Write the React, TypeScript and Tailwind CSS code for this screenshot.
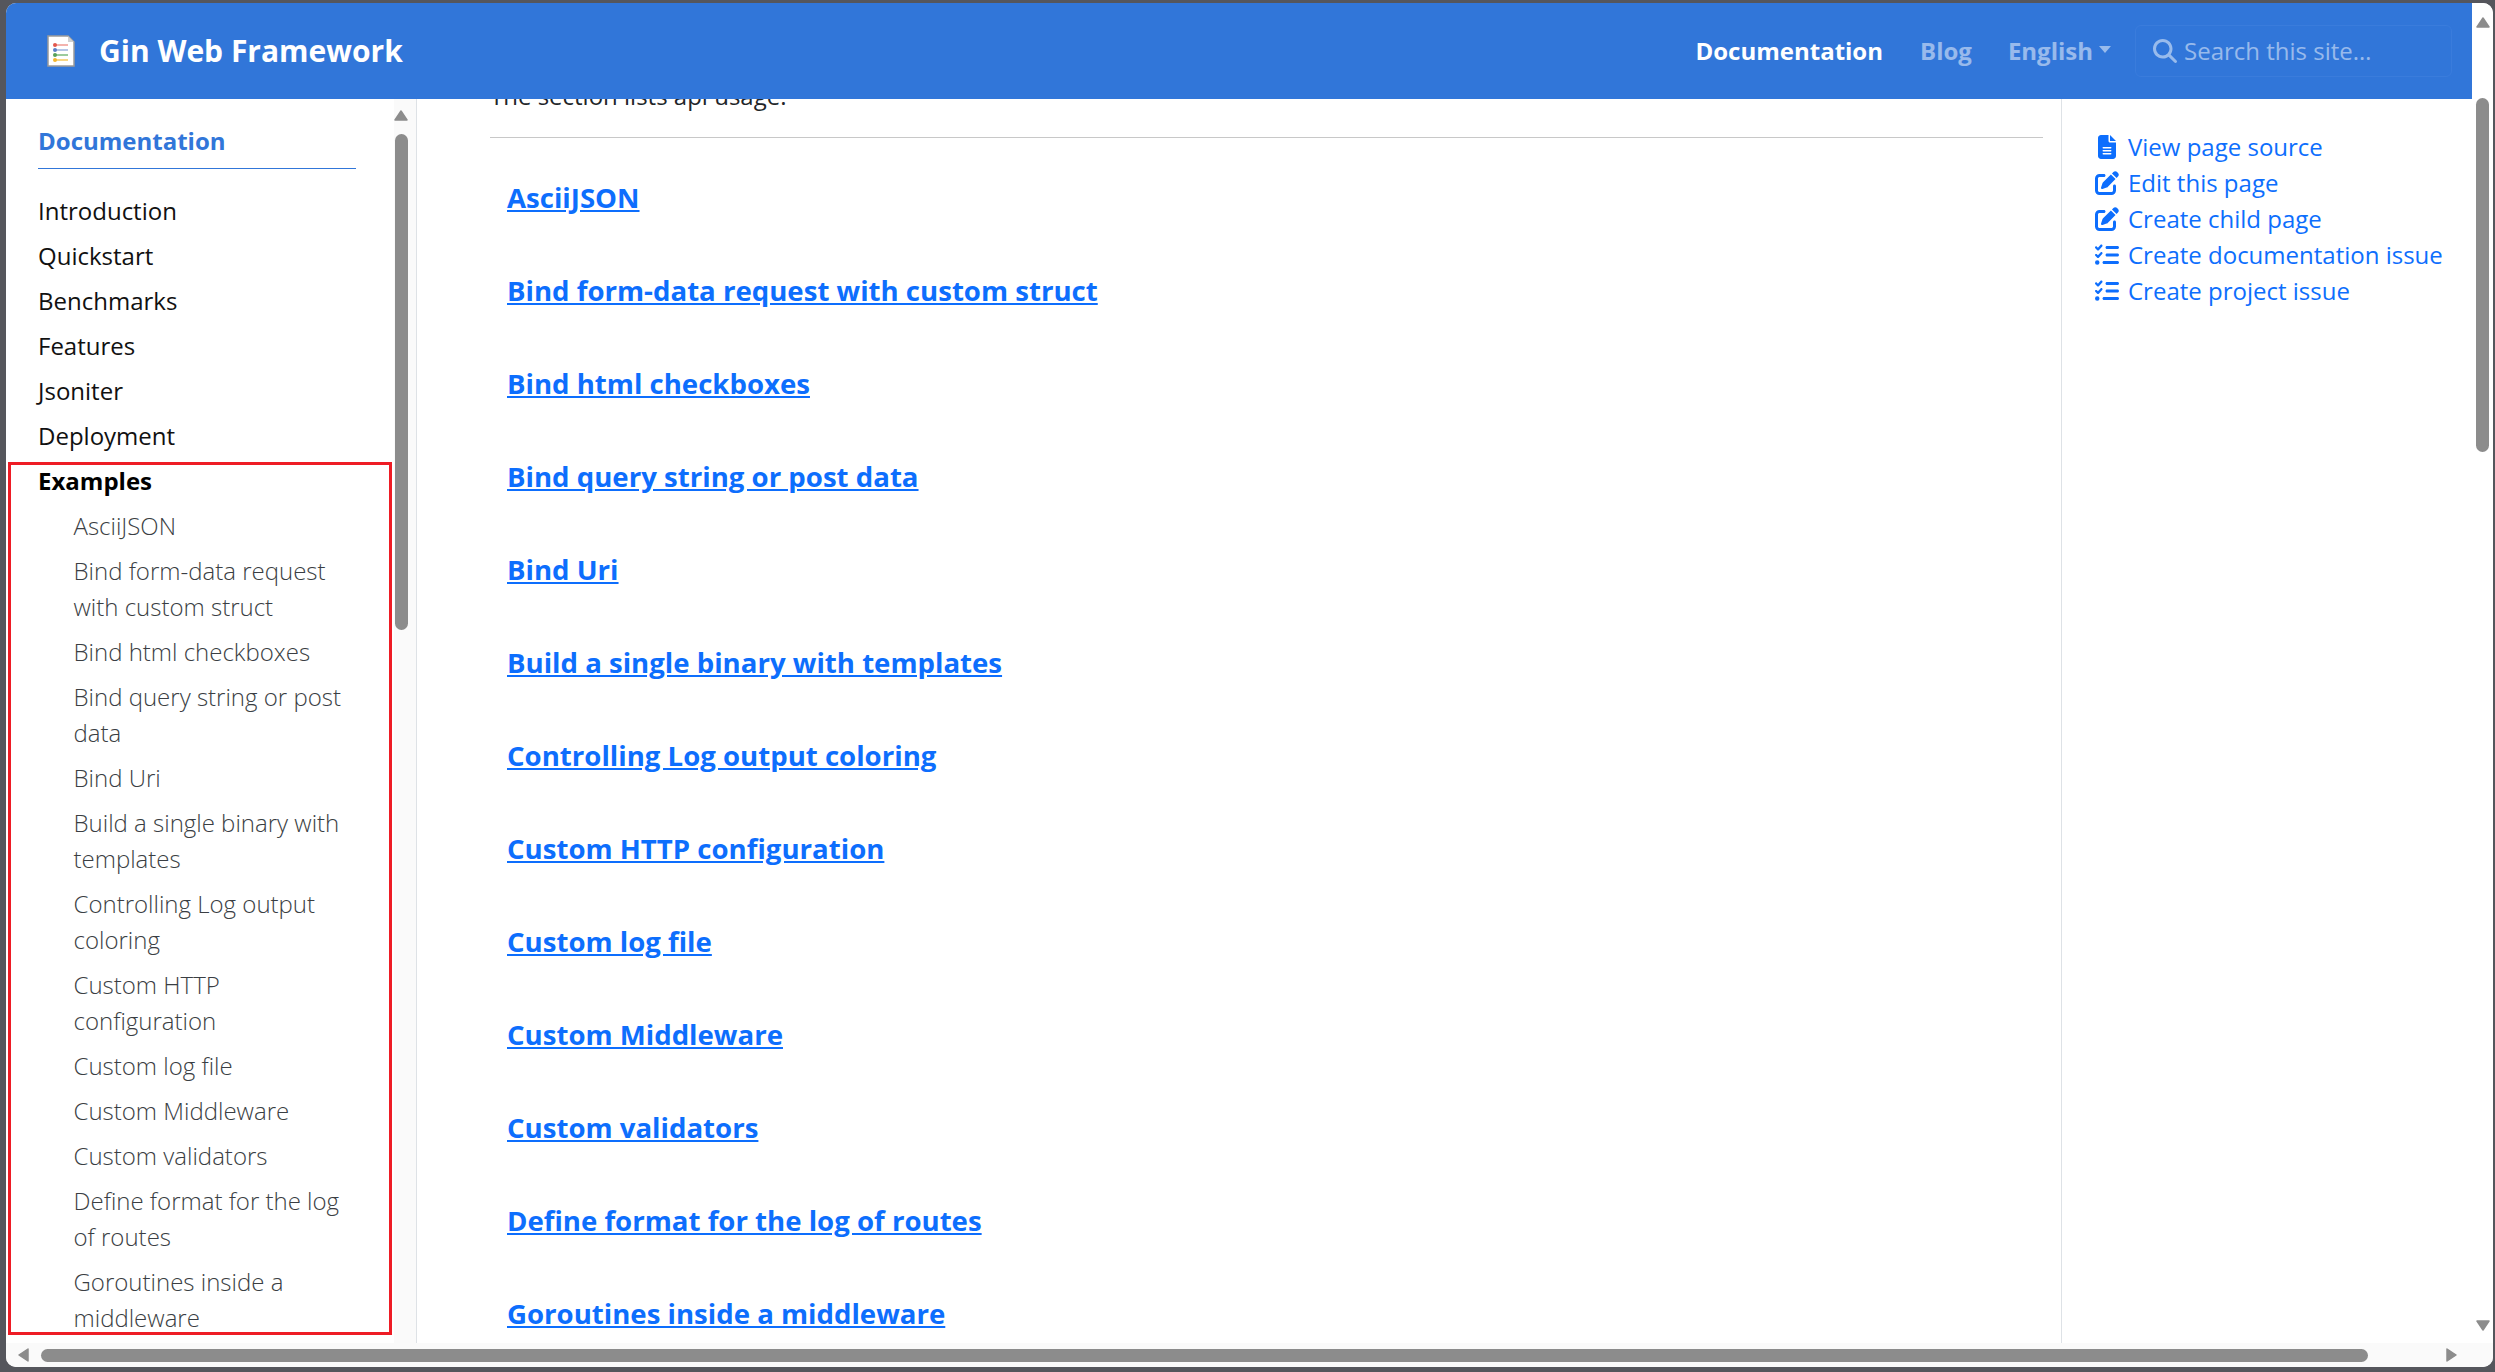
import { FaFileLines, FaPenToSquare, FaListCheck, FaMagnifyingGlass } from 'react-icons/fa6';

const topLinks = ['Introduction', 'Quickstart', 'Benchmarks', 'Features', 'Jsoniter', 'Deployment'];

const exampleLinks = [
  'AsciiJSON',
  'Bind form-data request with custom struct',
  'Bind html checkboxes',
  'Bind query string or post data',
  'Bind Uri',
  'Build a single binary with templates',
  'Controlling Log output coloring',
  'Custom HTTP configuration',
  'Custom log file',
  'Custom Middleware',
  'Custom validators',
  'Define format for the log of routes',
  'Goroutines inside a middleware',
];

const pageLinks = [
  { icon: FaFileLines, label: 'View page source' },
  { icon: FaPenToSquare, label: 'Edit this page' },
  { icon: FaPenToSquare, label: 'Create child page' },
  { icon: FaListCheck, label: 'Create documentation issue' },
  { icon: FaListCheck, label: 'Create project issue' },
];

function Arrow({ dir, className }: { dir: 'up' | 'down' | 'left' | 'right'; className?: string }) {
  const points = {
    up: '7,1 13,10 1,10',
    down: '1,1 13,1 7,10',
    left: '10,1 10,13 1,7',
    right: '1,1 1,13 10,7',
  }[dir];
  return (
    <svg width="14" height="14" viewBox="0 0 14 14" className={className}>
      <polygon points={points} fill="#8c8c8c" stroke="#8c8c8c" strokeWidth="1.5" strokeLinejoin="round" />
    </svg>
  );
}

function Logo() {
  const rows = [
    ['#e2574c', '#ef9a93', 10],
    ['#5b80c7', '#9db4e0', 15],
    ['#57a05a', '#7cba7e', 20],
    ['#f2b62f', '#f5c95f', 25],
  ] as const;
  return (
    <svg width="28" height="32" viewBox="0 0 28 32" className="shrink-0">
      <path d="M1 1H21L27 7V31H1Z" fill="#fff" stroke="#9a9a9a" strokeWidth="1.5" />
      <path d="M21 1V7H27Z" fill="#cfcfcf" />
      {rows.map(([dot, line, y]) => (
        <g key={y}>
          <rect x="7" y={y - 0.75} width="14" height="1.5" fill={line} />
          <circle cx="8" cy={y} r="2" fill={dot} />
        </g>
      ))}
    </svg>
  );
}

function Sidebar() {
  return (
    <aside className="relative flex w-[411px] shrink-0 overflow-hidden border-r border-[#dee2e6]">
      <nav className="min-w-0 flex-1 pl-[32px] pr-[38px] pt-[24px] text-[24px] leading-[36px]">
        <div className="border-b border-[#3176d9] pb-[9px] font-bold text-[#3176d9]">Documentation</div>
        <ul className="mt-[19px]">
          {topLinks.map((link) => (
            <li key={link} className="py-[4.5px] text-[#111]">
              {link}
            </li>
          ))}
          <li className="py-[4.5px] font-bold text-black">Examples</li>
          {exampleLinks.map((link) => (
            <li key={link} className="py-[4.5px] pl-[35.5px] font-light text-[#3a3e43]">
              {link}
            </li>
          ))}
        </ul>
      </nav>
      <div className="flex w-[22px] shrink-0 flex-col items-start bg-[#fafafa] pt-[11px]">
        <Arrow dir="up" />
        <div className="mt-[10px] ml-[1px] h-[496px] w-[13px] rounded-full bg-[#8c8c8c]" />
      </div>
      <div className="absolute left-[2px] top-[363px] h-[873px] w-[384px] border-[3px] border-[#ee1c25]" />
    </aside>
  );
}

export default function App() {
  return (
    <div className="h-screen overflow-hidden bg-[#55565c] pb-[5px] pl-[6px] pr-[2px] pt-[3px] font-['Open_Sans',sans-serif]">
      <div className="flex h-full flex-col overflow-hidden rounded-[10px] bg-white">
        <div className="flex min-h-0 flex-1">
          <div className="flex min-w-0 flex-1 flex-col">
            <header className="flex h-[96px] shrink-0 items-center bg-[#3176d9] pl-[41px] pr-[19px] text-[24px] font-bold">
              <Logo />
              <span className="ml-[24px] mt-[-2px] text-[30px] text-white">Gin Web Framework</span>
              <nav className="ml-auto mr-[1px] flex items-center">
                <span className="text-white">Documentation</span>
                <span className="ml-[37px] text-white/50">Blog</span>
                <span className="ml-[36px] flex items-center text-white/50">
                  English
                  <span className="ml-[6px] mt-[-4px] border-x-[6px] border-t-[7px] border-x-transparent border-t-white/50" />
                </span>
                <div className="ml-[24px] flex h-[52px] w-[317px] items-center rounded-md border border-[#3a7cdc] pl-[17px] text-[24px] font-normal text-white/50">
                  <FaMagnifyingGlass className="mr-[7px] size-[24px]" />
                  Search this site…
                </div>
              </nav>
            </header>
            <div className="flex min-h-0 flex-1">
              <Sidebar />
              <main className="min-w-0 flex-1 overflow-hidden pl-[73px] pr-[18px]">
                <p className="-mt-[21px] text-[24px] leading-[36px] text-[#212529]">The section lists api usage.</p>
                <hr className="mt-[23px] border-t border-[#c8c8c8]" />
                <div className="pl-[17px] pt-[37px]">
                  {exampleLinks.map((title) => (
                    <h2 key={title} className="mb-[48px] text-[27.6px] font-bold leading-[45px] text-[#0d6efd] underline">
                      {title}
                    </h2>
                  ))}
                </div>
              </main>
              <aside className="w-[411px] shrink-0 border-l border-[#dee2e6] pl-[33px] pt-[30px] text-[24px] leading-[36px] text-[#0d6efd]">
                {pageLinks.map(({ icon: Icon, label }, i) => (
                  <div key={i} className="flex items-center">
                    <span className="flex w-[33px] shrink-0 justify-center pr-[9px]">
                      <Icon className="size-[24px]" />
                    </span>
                    {label}
                  </div>
                ))}
              </aside>
            </div>
          </div>
          <div className="flex w-[21px] shrink-0 flex-col items-center bg-white pt-[14px]">
            <Arrow dir="up" />
            <div className="mt-[67px] h-[354px] w-[13px] rounded-full bg-[#8c8c8c]" />
            <Arrow dir="down" className="mt-auto mb-[9px]" />
          </div>
        </div>
        <div className="flex h-[24px] shrink-0 items-center bg-[#fafafa] pl-[12px] pr-[33px]">
          <Arrow dir="left" />
          <div className="ml-[9px] h-[13px] w-[2327px] rounded-full bg-[#8c8c8c]" />
          <Arrow dir="right" className="ml-auto" />
        </div>
      </div>
    </div>
  );
}
